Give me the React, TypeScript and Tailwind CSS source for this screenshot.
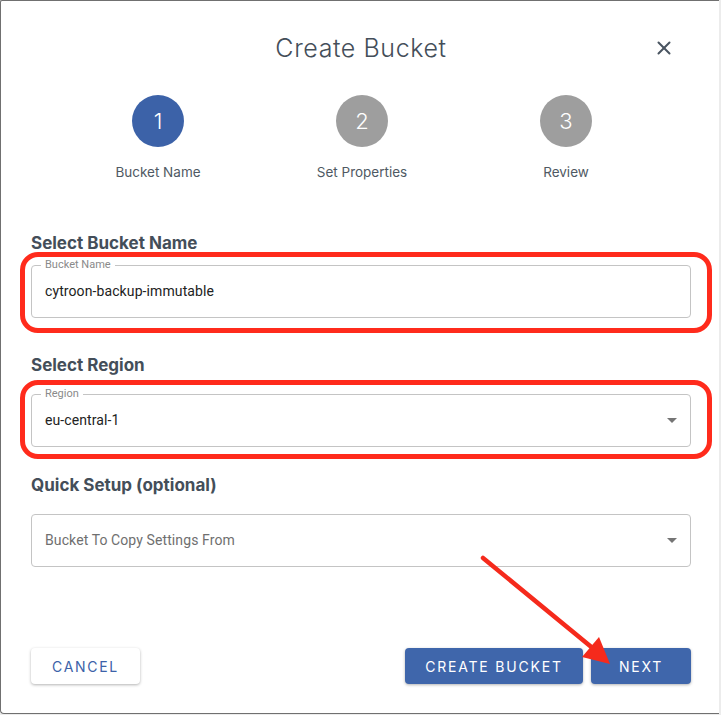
import { X } from "lucide-react";

const steps = [
  { n: 1, label: "Bucket Name", active: true },
  { n: 2, label: "Set Properties", active: false },
  { n: 3, label: "Review", active: false },
];

function DropArrow() {
  return (
    <svg width="10" height="5" viewBox="0 0 10 5" className="shrink-0">
      <path d="M0 0 L10 0 L5 5 Z" fill="#757575" />
    </svg>
  );
}

function OutlinedField({
  label,
  value,
  placeholder,
  select,
}: {
  label?: string;
  value?: string;
  placeholder?: string;
  select?: boolean;
}) {
  return (
    <div className="relative h-[53px] rounded-[4px] border border-[#c4c4c4] flex items-center pl-[13px] pr-[13px] font-[Roboto,'Liberation_Sans',sans-serif]">
      {label && (
        <span className="absolute -top-[8px] left-[9px] bg-white px-[4px] text-[11px] leading-[14px] text-[#8a8a8a]">
          {label}
        </span>
      )}
      <span
        className={`flex-1 text-[14px] tracking-[0.1px] ${value ? "text-[#222]" : "text-[#6f6f6f]"}`}
      >
        {value ?? placeholder}
      </span>
      {select && <DropArrow />}
    </div>
  );
}

export default function App() {
  return (
    <div
      className="relative w-[721px] h-[715px] bg-[#ececec] overflow-hidden"
      style={{ fontFamily: "Inter, Roboto, 'Liberation Sans', sans-serif" }}
    >
      <div className="w-[719px] h-[714px] bg-white border-l border-t border-b border-[#707070] rounded-bl-[4px] rounded-tl-[2px] pl-[30px] pr-[28px]">
        {/* header */}
        <div className="grid grid-cols-[1fr_auto_1fr] items-center pt-[31px]">
          <div />
          <h2 className="text-[25px] leading-[32px] text-[#444e59] font-light tracking-[0.6px]">
            Create Bucket
          </h2>
          <div className="flex justify-end pr-[16px]">
            <X size={22} strokeWidth={2.2} color="#4a5561" />
          </div>
        </div>

        {/* stepper */}
        <div className="grid grid-cols-3 w-[612px] ml-[25px] mt-[31px]">
          {steps.map((s) => (
            <div key={s.n} className="flex flex-col items-center">
              <div
                className={`w-[52px] h-[52px] rounded-full flex items-center justify-center text-white text-[22px] font-light ${
                  s.active ? "bg-[#3c62a8]" : "bg-[#9e9e9e]"
                }`}
              >
                {s.n}
              </div>
              <span className="mt-[15px] text-[13.5px] leading-[20px] text-[#4f5963]">
                {s.label}
              </span>
            </div>
          ))}
        </div>

        {/* form */}
        <h3 className="mt-[49px] text-[17px] leading-[24px] font-bold text-[#444e59]">
          Select Bucket Name
        </h3>
        <div className="relative mt-[10px]">
          <OutlinedField label="Bucket Name" value="cytroon-backup-immutable" />
          <div className="absolute -left-[11px] -right-[21px] -top-[13px] -bottom-[15px] border-[5px] border-[#ff2b1c] rounded-[18px] pointer-events-none" />
        </div>

        <h3 className="mt-[35px] text-[17px] leading-[24px] font-bold text-[#444e59]">
          Select Region
        </h3>
        <div className="relative mt-[17px]">
          <OutlinedField label="Region" value="eu-central-1" select />
          <div className="absolute -left-[11px] -right-[21px] -top-[14px] -bottom-[12px] border-[5px] border-[#ff2b1c] rounded-[18px] pointer-events-none" />
        </div>

        <h3 className="mt-[26px] text-[17px] leading-[24px] font-bold text-[#444e59]">
          Quick Setup (optional)
        </h3>
        <div className="mt-[17px]">
          <OutlinedField placeholder="Bucket To Copy Settings From" select />
        </div>

        {/* footer */}
        <div className="mt-[81px] flex justify-between">
          <button className="h-[36px] w-[109px] rounded-[4px] bg-white text-[#3c62a8] text-[14px] tracking-[1.7px] shadow-[0_1px_3px_rgba(0,0,0,0.3)]">
            CANCEL
          </button>
          <div className="flex gap-[8px]">
            <button className="h-[36px] w-[178px] rounded-[4px] bg-[#3f66ab] text-white text-[14px] tracking-[1.8px] shadow-[0_1px_3px_rgba(0,0,0,0.3)]">
              CREATE BUCKET
            </button>
            <button className="h-[36px] w-[100px] rounded-[4px] bg-[#3f66ab] text-white text-[14px] tracking-[1.8px] shadow-[0_1px_3px_rgba(0,0,0,0.3)]">
              NEXT
            </button>
          </div>
        </div>
      </div>

      {/* annotation arrow */}
      <svg
        className="absolute left-0 top-0 pointer-events-none"
        width="721"
        height="715"
        viewBox="0 0 721 715"
      >
        <line x1="483" y1="558" x2="595" y2="650" stroke="#f52a1c" strokeWidth="4.5" strokeLinecap="round" />
        <polygon points="582,657 599,637 610,664" fill="#f52a1c" />
      </svg>
    </div>
  );
}
